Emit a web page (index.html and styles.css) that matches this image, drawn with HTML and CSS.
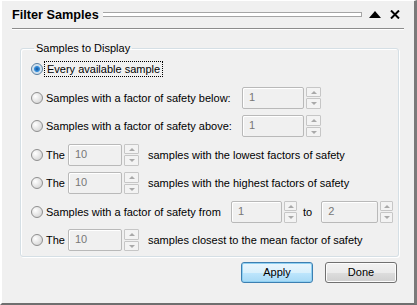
FILE: index.html
```html
<!DOCTYPE html>
<html lang="en">
<head>
    <meta charset="UTF-8">
    <title>Filter Samples</title>
    <link rel="stylesheet" href="styles.css">
</head>
<body>

    <div class="window">
        <div class="title-bar">
            <span class="title">Filter Samples</span>
            <span class="grip"></span>
            <svg class="collapse" width="12" height="7" viewBox="0 0 12 7"><polygon points="0,7 12,7 6,0" fill="#000"/></svg>
            <svg class="close" width="10" height="9" viewBox="0 0 10 9"><path d="M1 0.5 L9 8.5 M9 0.5 L1 8.5" stroke="#000" stroke-width="2"/></svg>
        </div>
        <div class="title-rule"></div>

        <fieldset class="group">
            <legend>Samples to Display</legend>

            <div class="row">
                <span class="radio checked"></span>
                <span class="label focused">Every available sample</span>
            </div>

            <div class="row">
                <span class="radio"></span>
                <span class="label lbl-long">Samples with a factor of safety below:</span>
                <span class="field w61">1</span>
                <span class="arrows"><span class="up"></span><span class="down"></span></span>
            </div>

            <div class="row">
                <span class="radio"></span>
                <span class="label lbl-long">Samples with a factor of safety above:</span>
                <span class="field w61">1</span>
                <span class="arrows"><span class="up"></span><span class="down"></span></span>
            </div>

            <div class="row">
                <span class="radio"></span>
                <span class="label lbl-the">The</span>
                <span class="field w53">10</span>
                <span class="arrows"><span class="up"></span><span class="down"></span></span>
                <span class="label after">samples with the lowest factors of safety</span>
            </div>

            <div class="row">
                <span class="radio"></span>
                <span class="label lbl-the">The</span>
                <span class="field w53">10</span>
                <span class="arrows"><span class="up"></span><span class="down"></span></span>
                <span class="label after">samples with the highest factors of safety</span>
            </div>

            <div class="row">
                <span class="radio"></span>
                <span class="label lbl-from">Samples with a factor of safety from</span>
                <span class="field w50">1</span>
                <span class="arrows narrow"><span class="up"></span><span class="down"></span></span>
                <span class="label to">to</span>
                <span class="field w56">2</span>
                <span class="arrows narrow"><span class="up"></span><span class="down"></span></span>
            </div>

            <div class="row">
                <span class="radio"></span>
                <span class="label lbl-the">The</span>
                <span class="field w53">10</span>
                <span class="arrows"><span class="up"></span><span class="down"></span></span>
                <span class="label after">samples closest to the mean factor of safety</span>
            </div>
        </fieldset>

        <div class="buttons">
            <button class="btn default">Apply</button>
            <button class="btn">Done</button>
        </div>
    </div>

</body>
</html>
```

FILE: styles.css
```css
html, body {
    margin: 0;
    padding: 0;
}

body {
    font-family: "Liberation Sans", Arial, sans-serif;
    font-size: 11px;
    color: #000;
    background-color: #f0f0f0;
}

.window {
    width: 417px;
    height: 305px;
    box-sizing: border-box;
    background-color: #f0f0f0;
    border-left: 2px solid #ffffff;
    border-top: 1px solid #ffffff;
    border-right: 3px solid #7a7a7a;
    border-bottom: 2px solid #6f6f6f;
}

/* title bar */

.title-bar {
    display: flex;
    align-items: center;
    height: 27px;
    padding: 0 14px 0 10px;
}

.title {
    font-weight: bold;
    font-size: 12.7px;
}

.grip {
    flex: 1;
    height: 3px;
    margin: 0 7px 0 4px;
    border-top: 1px solid #a5a5a5;
    border-bottom: 1px solid #a5a5a5;
    border-right: 1px solid #a5a5a5;
    background-color: #ffffff;
}

.close {
    margin-left: 9px;
}

.title-rule {
    margin: 0 10px;
    border-top: 1px solid #8c8c8c;
    border-bottom: 1px solid #ffffff;
}

/* group box */

.group {
    margin: 12px 15px 0 18px;
    padding: 1px 0 1px 10px;
    border: 1px solid #d5dfe5;
    border-radius: 3px;
    box-shadow: inset 1px 1px 0 #ffffff, 1px 1px 0 #ffffff;
}

.group legend {
    padding: 0 2px;
    margin-left: 3px;
}

.row {
    display: flex;
    align-items: center;
    height: 28.5px;
}

.radio {
    width: 12px;
    height: 12px;
    box-sizing: border-box;
    border-radius: 50%;
    border: 1px solid #8f8f8f;
    background: radial-gradient(circle at 35% 35%, #ffffff, #d6d6d6 80%);
    margin-right: 3px;
}

.radio.checked {
    border-color: #5a7fa0;
    background: radial-gradient(circle, #0f4f9a 0, #3a93de 2.6px, #c9dceb 3.4px, #eef3f8 100%);
}

.label {
    white-space: nowrap;
}

.label.focused {
    outline: 1px dotted #000;
    outline-offset: 1px;
    padding: 0 1px;
}

.lbl-long { width: 196px; }
.lbl-the { width: 22px; }
.lbl-from { width: 185px; }

.label.after {
    margin-left: 9px;
}

.label.to {
    margin: 0 9px 0 6px;
}

/* spin boxes */

.field {
    height: 22px;
    box-sizing: border-box;
    border: 1px solid #b9b9b9;
    border-radius: 2px;
    padding: 3px 6px;
    color: #777777;
    background-color: #f0f0f0;
    box-shadow: inset 1px 1px 0 #ffffff;
}

.w61 { width: 62px; }
.w53 { width: 54px; }
.w50 { width: 51px; }
.w56 { width: 57px; }

.arrows {
    display: flex;
    flex-direction: column;
    gap: 1px;
    margin-left: 2px;
}

.arrows span {
    width: 15px;
    height: 10.5px;
    box-sizing: border-box;
    border: 1px solid #c6c6c6;
    border-radius: 1px;
    background-color: #f3f3f3;
    position: relative;
}

.arrows.narrow span {
    width: 13px;
}

.arrows span::after {
    content: "";
    position: absolute;
    left: 50%;
    margin-left: -3px;
    top: 3px;
    border-left: 3px solid transparent;
    border-right: 3px solid transparent;
}

.arrows .up::after {
    border-bottom: 3px solid #a9a9a9;
}

.arrows .down::after {
    border-top: 3px solid #a9a9a9;
}

/* buttons */

.buttons {
    display: flex;
    justify-content: flex-end;
    gap: 12px;
    padding: 5px 17px 0 0;
}

.btn {
    width: 72px;
    height: 21px;
    font-family: "Liberation Sans", Arial, sans-serif;
    font-size: 11px;
    color: #000;
    border: 1px solid #707070;
    border-radius: 3px;
    background: linear-gradient(#f2f2f2 0, #ebebeb 50%, #dddddd 51%, #cfcfcf 100%);
    box-shadow: inset 0 0 0 1px #fcfcfc;
}

.btn.default {
    border-color: #3c7fb1;
    background: linear-gradient(#eaf6fd 0, #d9f0fc 50%, #bee6fd 51%, #a7d9f5 100%);
    box-shadow: inset 0 0 0 1px #8fd0f2;
}
```
